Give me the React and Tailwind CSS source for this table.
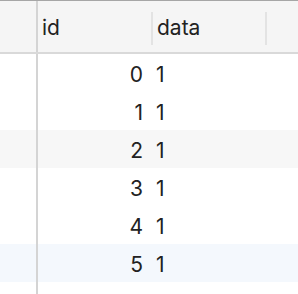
export default function App() {
  const rows = [0, 1, 2, 3, 4, 5];
  const bg = (i) =>
    i === 2 ? "bg-[#f7f7f7]" : i === 5 ? "bg-[#f4f8fd]" : "bg-white";
  return (
    <div
      className="w-[298px] h-[294px] flex flex-col bg-white text-[#222] overflow-hidden"
      style={{ fontFamily: "Inter, 'Noto Sans', sans-serif" }}
    >
      <div className="h-[54px] shrink-0 flex bg-[#f5f5f5] border-t border-t-[#a6a6a6] border-b-2 border-b-[#d9d9d9]">
        <div className="w-[38px] shrink-0 border-r-2 border-[#d4d4d4]" />
        <div className="w-[113px] shrink-0 flex items-center pl-[4px] text-[21px] leading-none pt-[2px]">id</div>
        <div className="w-[2px] shrink-0 bg-[#e3e3e3] mt-[11px] h-[33px]" />
        <div className="w-[112px] shrink-0 flex items-center pl-[4px] text-[21px] leading-none pt-[2px]">data</div>
        <div className="w-[2px] shrink-0 bg-[#e3e3e3] mt-[11px] h-[33px]" />
        <div className="flex-1" />
      </div>
      {rows.map((r) => (
        <div key={r} className={`h-[38px] shrink-0 flex ${bg(r)}`}>
          <div className="w-[38px] shrink-0 border-r-2 border-[#d4d4d4]" />
          <div className="w-[113px] shrink-0 flex items-center justify-end pr-[8px] text-[21px] leading-none pt-[3px]">
            {r}
          </div>
          <div className="flex-1 flex items-center pl-[5px] text-[21px] leading-none pt-[3px]">1</div>
        </div>
      ))}
      <div className="flex-1 flex">
        <div className="w-[38px] shrink-0 border-r-2 border-[#d4d4d4]" />
      </div>
    </div>
  );
}
